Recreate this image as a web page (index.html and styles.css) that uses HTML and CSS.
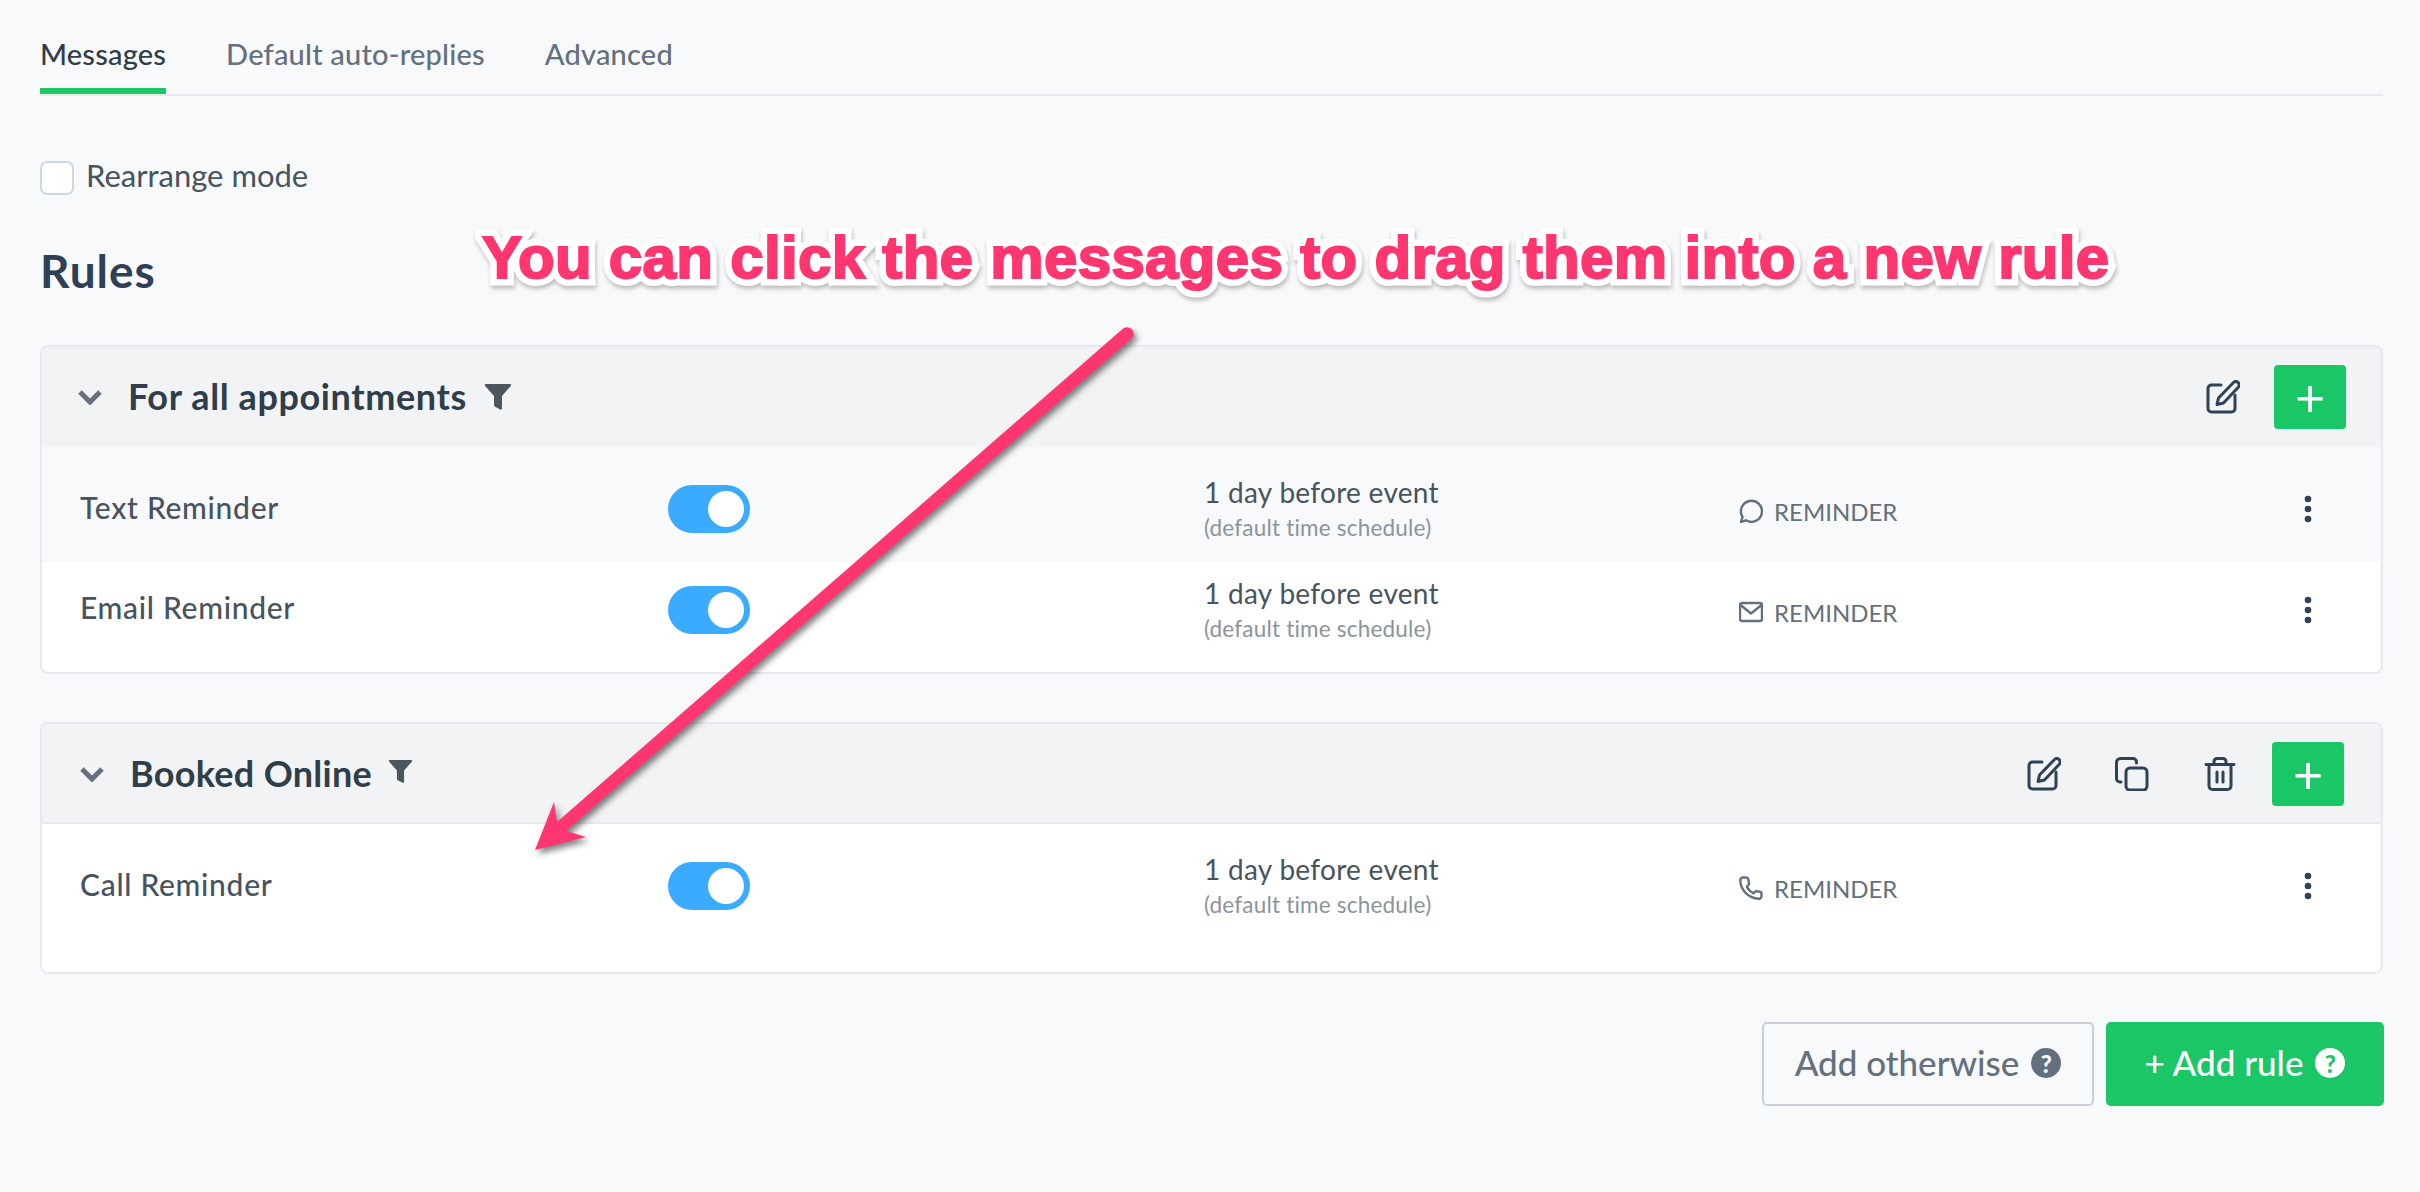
FILE: index.html
```html
<!DOCTYPE html>
<html lang="en">

<head>
  <meta charset="UTF-8">
  <meta name="viewport" content="width=device-width, initial-scale=1.0">
  <title>Messages</title>
  <link rel="stylesheet" href="styles.css">
</head>

<body>
  <div class="page">
    <div class="tabs">
      <div class="tab active">Messages</div>
      <div class="tab">Default auto-replies</div>
      <div class="tab">Advanced</div>
    </div>

    <label class="rearrange">
      <span class="checkbox"></span>
      <span class="rearrange-text">Rearrange mode</span>
    </label>

    <h2 class="section-title">Rules</h2>

    <div class="rule rule-first">
      <div class="rule-head">
        <svg class="chevron" viewBox="0 0 26 16"><path d="M3 3l10 10L23 3"/></svg>
        <span class="rule-title">For all appointments</span>
        <svg class="funnel" viewBox="0 0 28 28"><path d="M2 1h24c1 0 1.500 1 .8 1.900L18 13v12.500c0 1-1 1.500-1.800 1L11.500 24c-.6-.4-1.500-1-1.500-2v-9L1.200 2.900C.5 2 1 1 2 1z"/></svg>
        <div class="head-right">
          <div class="tools">
            <svg class="tool" viewBox="0 0 34 34"><path d="M15 5H5.500A3.500 3.500 0 0 0 2 8.500v20A3.500 3.500 0 0 0 5.500 32h20a3.500 3.500 0 0 0 3.500-3.500V15"/><path d="M27.500 2.500a3.400 3.400 0 0 1 4.800 4.800L17.500 23l-6.500 1.500 1.500-6.500z"/></svg>
          </div>
          <div class="btn-plus">+</div>
        </div>
      </div>
      <div class="row row-a tinted">
        <div class="row-name">Text Reminder</div>
        <div class="toggle"><span class="knob"></span></div>
        <div class="when">
          <div class="when-main">1 day before event</div>
          <div class="when-sub">(default time schedule)</div>
        </div>
        <div class="kind">
          <svg class="kind-icon" viewBox="0 0 24 24"><path d="M2 23l1.500-5.200A10.500 10.500 0 1 1 7 21.300z"/></svg>
          <span>REMINDER</span>
        </div>
        <svg class="dots" viewBox="0 0 26 28"><circle cx="13" cy="4" r="3.300"/><circle cx="13" cy="14" r="3.300"/><circle cx="13" cy="24" r="3.300"/></svg>
      </div>
      <div class="row row-b">
        <div class="row-name">Email Reminder</div>
        <div class="toggle"><span class="knob"></span></div>
        <div class="when">
          <div class="when-main">1 day before event</div>
          <div class="when-sub">(default time schedule)</div>
        </div>
        <div class="kind">
          <svg class="kind-icon" viewBox="0 0 24 24"><rect x="1" y="3" width="22" height="18" rx="2"/><path d="M1.500 5L12 13.500 22.500 5"/></svg>
          <span>REMINDER</span>
        </div>
        <svg class="dots" viewBox="0 0 26 28"><circle cx="13" cy="4" r="3.300"/><circle cx="13" cy="14" r="3.300"/><circle cx="13" cy="24" r="3.300"/></svg>
      </div>
    </div>

    <div class="rule rule-second">
      <div class="rule-head lined">
        <svg class="chevron" viewBox="0 0 26 16"><path d="M3 3l10 10L23 3"/></svg>
        <span class="rule-title">Booked Online</span>
        <svg class="funnel small" viewBox="0 0 28 28"><path d="M2 1h24c1 0 1.500 1 .8 1.900L18 13v12.500c0 1-1 1.500-1.800 1L11.500 24c-.6-.4-1.500-1-1.500-2v-9L1.200 2.900C.5 2 1 1 2 1z"/></svg>
        <div class="head-right wide">
          <div class="tools">
            <svg class="tool" viewBox="0 0 34 34"><path d="M15 5H5.500A3.500 3.500 0 0 0 2 8.500v20A3.500 3.500 0 0 0 5.500 32h20a3.500 3.500 0 0 0 3.500-3.500V15"/><path d="M27.500 2.500a3.400 3.400 0 0 1 4.800 4.800L17.500 23l-6.500 1.500 1.500-6.500z"/></svg>
            <svg class="tool" viewBox="0 0 34 34"><rect x="11" y="11" width="21" height="22" rx="4"/><path d="M6 25H5a3.500 3.500 0 0 1-3.500-3.500v-16A4 4 0 0 1 5.500 1.500H18A3.500 3.500 0 0 1 21.500 5v1"/></svg>
            <svg class="tool" viewBox="0 0 34 34"><path d="M3 7.500h28"/><path d="M11 7V4.500A3 3 0 0 1 14 1.500h6a3 3 0 0 1 3 3V7"/><path d="M6 8v21a3.500 3.500 0 0 0 3.500 3.500h15A3.500 3.500 0 0 0 28 29V8"/><path d="M14 15v10M20 15v10"/></svg>
          </div>
          <div class="btn-plus">+</div>
        </div>
      </div>
      <div class="row row-c">
        <div class="row-name">Call Reminder</div>
        <div class="toggle"><span class="knob"></span></div>
        <div class="when">
          <div class="when-main">1 day before event</div>
          <div class="when-sub">(default time schedule)</div>
        </div>
        <div class="kind">
          <svg class="kind-icon" viewBox="0 0 24 24"><path d="M6.500 1.500H3.800A2.500 2.500 0 0 0 1.300 4.300 19 19 0 0 0 19.700 22.700a2.500 2.500 0 0 0 2.800-2.500v-2.400a2 2 0 0 0-1.700-2l-3-.6a2 2 0 0 0-1.900.7l-1.400 1.500a14 14 0 0 1-6.600-6.600L9.400 9a2 2 0 0 0 .6-1.900l-.6-3.300a2.400 2.400 0 0 0-2.900-2.300z"/></svg>
          <span>REMINDER</span>
        </div>
        <svg class="dots" viewBox="0 0 26 28"><circle cx="13" cy="4" r="3.300"/><circle cx="13" cy="14" r="3.300"/><circle cx="13" cy="24" r="3.300"/></svg>
      </div>
    </div>

    <div class="footer-actions">
      <div class="btn btn-outline"><span class="btn-text">Add otherwise</span> <span class="help">?</span></div>
      <div class="btn btn-green"><span class="btn-text">+ Add rule</span> <span class="help">?</span></div>
    </div>

    <!-- annotation drawn on top of the screenshot -->
    <div class="callout" data-text="You can click the messages to drag them into a new rule">You can click the messages to drag them into a new rule</div>
    <svg class="arrow" viewBox="0 0 2420 1192">
      <path d="M1122 329.500a6.500 6.500 0 0 1 10 8.500L566 831l20 6-51 13 19-48 3 20z"/>
    </svg>
  </div>
</body>

</html>
```

FILE: styles.css
```css
* {
  box-sizing: border-box;
}

body {
  margin: 0;
  background-color: #f8f9fb;
  font-family: Lato, "Noto Sans", sans-serif;
  color: #47535e;
}

.page {
  position: relative;
  height: 1192px;
  padding: 0 37px 0 40px;
  overflow: hidden;
}

/* Tabs */
.tabs {
  display: flex;
  gap: 60px;
  height: 96px;
  border-bottom: 2px solid #e8e9ef;
}

.tab {
  height: 94px;
  padding-top: 36px;
  border-bottom: 6px solid transparent;
  font-size: 29px;
  line-height: 36px;
  letter-spacing: 0.2px;
  font-weight: 500;
  color: #64707d;
}

.tab.active {
  border-bottom-color: #1bc667;
  color: #2f3e4a;
}

/* Rearrange */
.rearrange {
  display: flex;
  align-items: center;
  gap: 12px;
  margin-top: 65px;
  height: 34px;
  font-size: 31px;
}

.rearrange-text {
  margin-bottom: 6px;
}

.checkbox {
  width: 34px;
  height: 34px;
  background-color: #fff;
  border: 2px solid #cfd7e4;
  border-radius: 7px;
}

.section-title {
  margin: 51px 0 49px;
  font-size: 46px;
  line-height: 50px;
  letter-spacing: 1px;
  font-weight: 700;
  color: #2f4054;
}

/* Rule cards */
.rule {
  border: 2px solid #e8e9ef;
  border-radius: 8px;
  background-color: #fff;
  overflow: hidden;
}

.rule-first {
  height: 329px;
}

.rule-second {
  height: 252px;
  margin-top: 48px;
}

.rule-head {
  display: flex;
  align-items: center;
  height: 100px;
  padding: 0 35px 0 35px;
  background-color: #f2f3f5;
}

.rule-head.lined {
  border-bottom: 2px solid #e8e9ef;
  padding: 2px 37px 0 37px;
}

.chevron {
  width: 26px;
  height: 16px;
  fill: none;
  stroke: #64707d;
  stroke-width: 5;
}

.rule-title {
  margin-left: 25px;
  margin-bottom: 2px;
  font-size: 36px;
  letter-spacing: 0.3px;
  font-weight: 700;
  color: #2f3e4a;
}

.rule-first .rule-title {
  letter-spacing: 0.6px;
}

.funnel {
  width: 28px;
  height: 28px;
  margin-left: 17px;
  fill: #4c565e;
}

.funnel.small {
  width: 25px;
  height: 25px;
  margin-left: 16px;
  margin-bottom: 6px;
}

.head-right {
  display: flex;
  align-items: center;
  gap: 34px;
  margin-left: auto;
}

.head-right.wide {
  gap: 35px;
}

.tools {
  display: flex;
  gap: 54px;
}

.tool {
  width: 34px;
  height: 34px;
  fill: none;
  stroke: #2f4256;
  stroke-width: 3;
  stroke-linecap: round;
  stroke-linejoin: round;
}

.btn-plus {
  display: flex;
  align-items: center;
  justify-content: center;
  width: 72px;
  height: 64px;
  background-color: #1bc667;
  border-radius: 4px;
  color: #fff;
  font-size: 52px;
  line-height: 1;
}

/* Message rows */
.row {
  display: grid;
  grid-template-columns: 588px 536px 535px 1fr 26px;
  align-items: center;
  padding-left: 38px;
  padding-right: 60px;
}

.row.tinted {
  background-color: #f8f9fb;
}

.row-a {
  padding-top: 27px;
  padding-bottom: 16px;
}

.row-b {
  padding-top: 13px;
  padding-bottom: 23px;
}

.row-c {
  padding-top: 27px;
  padding-bottom: 47px;
}

.row-name {
  margin-bottom: 6px;
  font-size: 30px;
  letter-spacing: 0.7px;
  font-weight: 500;
}

.row-b .row-name {
  margin-bottom: 8px;
}

.toggle {
  display: flex;
  align-items: center;
  justify-content: flex-end;
  width: 82px;
  height: 48px;
  margin-bottom: 2px;
  padding-right: 6px;
  background-color: #3aabff;
  border-radius: 24px;
}

.knob {
  width: 36px;
  height: 36px;
  background-color: #fff;
  border-radius: 50%;
}

.when {
  height: 72px;
}

.when-main {
  font-size: 28px;
  line-height: 36px;
  letter-spacing: 0.3px;
  color: #47535e;
}

.when-sub {
  font-size: 22.5px;
  line-height: 36px;
  letter-spacing: 0.2px;
  color: #8b949c;
}

.kind {
  display: flex;
  align-items: center;
  gap: 11px;
  margin-top: 2px;
  font-size: 24px;
  color: #64707d;
}

.kind-icon {
  width: 24px;
  height: 24px;
  fill: none;
  stroke: #64707d;
  stroke-width: 2.4;
  stroke-linejoin: round;
  stroke-linecap: round;
}

.dots {
  width: 26px;
  height: 28px;
  margin-bottom: 2px;
  fill: #2f4256;
}

/* Footer buttons */
.footer-actions {
  display: flex;
  justify-content: flex-end;
  gap: 12px;
  margin-top: 48px;
  margin-right: -1px;
}

.btn {
  display: flex;
  align-items: center;
  justify-content: center;
  gap: 12px;
  height: 84px;
  border-radius: 5px;
  font-size: 35px;
  font-weight: 500;
}

.btn-text {
  margin-bottom: 4px;
}

.btn-outline {
  width: 332px;
  border: 2px solid #c8ced5;
  color: #64707d;
}

.btn-green {
  width: 278px;
  background-color: #1bc667;
  color: #fff;
}

.help {
  display: flex;
  align-items: center;
  justify-content: center;
  width: 30px;
  height: 30px;
  margin-bottom: 2px;
  background-color: #64707d;
  border-radius: 50%;
  color: #f8f9fb;
  font-size: 24px;
  font-weight: 900;
}

.btn-green .help {
  background-color: #fff;
  color: #1bc667;
}

/* Annotation */
.callout {
  position: absolute;
  left: 482px;
  top: 220px;
  font-family: "Liberation Sans", Arial, sans-serif;
  font-size: 60px;
  line-height: 76px;
  letter-spacing: 0.33px;
  font-weight: 700;
  white-space: nowrap;
  color: #ff3670;
  -webkit-text-stroke: 15px #fff;
  paint-order: stroke fill;
  filter: drop-shadow(1px 3px 2px rgba(0, 0, 0, 0.25));
}

/* second copy on top, thickens the letters like the marker font */
.callout::after {
  content: attr(data-text);
  position: absolute;
  left: 0;
  top: 0;
  -webkit-text-stroke: 2px #ff3670;
}

.arrow {
  position: absolute;
  left: 0;
  top: 0;
  width: 2420px;
  height: 1192px;
  fill: #ff3670;
  filter: drop-shadow(3px 4px 3px rgba(0, 0, 0, 0.5));
}
```
